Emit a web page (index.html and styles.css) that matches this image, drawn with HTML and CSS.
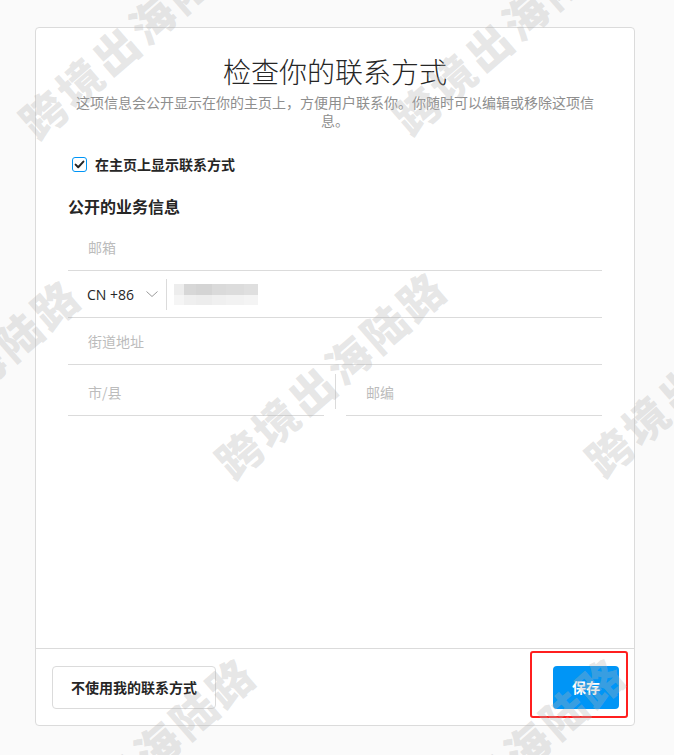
FILE: index.html
```html
<!DOCTYPE html>
<html lang="zh-CN">
<head>
<meta charset="utf-8">
<title>检查你的联系方式</title>
<link rel="stylesheet" href="styles.css">
</head>
<body>
<div class="card">
  <div class="card-body">
    <div class="header">
      <h1 class="title">检查你的联系方式</h1>
      <p class="subtitle">这项信息会公开显示在你的主页上，方便用户联系你。你随时可以编辑或移除这项信息。</p>
    </div>
    <div class="form">
      <label class="check-row">
        <span class="checkbox">
          <svg width="15" height="15" viewBox="0 0 15 15"><path d="M3.6 7.6 L6.2 10.2 L11.4 4.6" fill="none" stroke="#262626" stroke-width="2" stroke-linecap="round" stroke-linejoin="round"/></svg>
        </span>
        <span class="check-label">在主页上显示联系方式</span>
      </label>
      <h2 class="section-title">公开的业务信息</h2>
      <div class="field"><span class="placeholder">邮箱</span></div>
      <div class="field phone">
        <span class="country">CN +86</span>
        <svg class="chevron" width="12" height="6" viewBox="0 0 12 6"><polyline points="0.5,0.5 6,5.5 11.5,0.5" fill="none" stroke="#9a9a9a" stroke-width="1"/></svg>
        <span class="vdivider"></span>
        <span class="mosaic">
          <i class="m1"></i><i class="m2"></i><i class="m3"></i><i class="m4"></i><i class="m5"></i><i class="m6"></i>
          <i class="n1"></i><i class="n2"></i><i class="n3"></i><i class="n4"></i><i class="n5"></i><i class="n6"></i>
        </span>
      </div>
      <div class="field"><span class="placeholder">街道地址</span></div>
      <div class="city-row">
        <div class="field"><span class="placeholder">市/县</span></div>
        <div class="gap"><span class="vdivider tall"></span></div>
        <div class="field"><span class="placeholder">邮编</span></div>
      </div>
    </div>
  </div>
  <div class="footer">
    <button class="btn btn-secondary">不使用我的联系方式</button>
    <div class="save-wrap">
      <button class="btn btn-primary">保存</button>
    </div>
  </div>
</div>
<div class="watermarks" aria-hidden="true">
  <span class="wm wm1">跨境出海陆路</span>
  <span class="wm wm2">跨境出海陆路</span>
  <span class="wm wm3">跨境出海陆路</span>
  <span class="wm wm4">跨境出海陆路</span>
  <span class="wm wm5">跨境出海陆路</span>
  <span class="wm wm6">跨境出海陆路</span>
  <span class="wm wm7">跨境出海陆路</span>
</div>
</body>
</html>
```
FILE: styles.css
```css
* { box-sizing: border-box; }
html, body { margin: 0; padding: 0; }
body {
  background: #fafafa;
  font-family: "Noto Sans", "Noto Sans CJK SC", sans-serif;
  color: #262626;
  width: 674px;
  height: 755px;
  overflow: hidden;
  position: relative;
}
.card {
  margin: 27px 0 0 35px;
  width: 600px;
  height: 699px;
  background: #fff;
  border: 1px solid #dbdbdb;
  border-radius: 4px;
  display: flex;
  flex-direction: column;
}
.card-body { flex: 1; }
.header {
  padding: 25px 40px 0;
  text-align: center;
}
.title {
  margin: 0;
  font-family: "Noto Sans CJK SC", sans-serif;
  font-size: 28px;
  line-height: 36px;
  font-weight: 300;
  color: #262626;
}
.subtitle {
  margin: 4px 0 0;
  font-family: "Noto Sans CJK SC", sans-serif;
  font-size: 14px;
  line-height: 18px;
  color: #8e8e8e;
}
.form { padding: 0 32px; }
.check-row {
  margin-top: 27px;
  display: flex;
  align-items: center;
  padding-left: 4px;
  height: 16px;
}
.checkbox {
  width: 15px;
  height: 15px;
  border: 1px solid #0095f6;
  border-radius: 3px;
  display: flex;
  align-items: center;
  justify-content: center;
  overflow: hidden;
}
.checkbox svg { display: block; flex: none; }
.check-label {
  margin-left: 8px;
  font-family: "Noto Sans CJK SC", sans-serif;
  font-size: 14px;
  font-weight: 700;
  line-height: 16px;
}
.section-title {
  margin: 24px 0 0;
  font-family: "Noto Sans CJK SC", sans-serif;
  font-size: 16px;
  line-height: 20px;
  font-weight: 700;
}
.section-title + .field { margin-top: 8px; }
.field {
  height: 47px;
  border-bottom: 1px solid #dbdbdb;
  padding-left: 20px;
  display: flex;
  align-items: center;
}
.placeholder {
  font-family: "Noto Sans CJK SC", sans-serif;
  font-size: 14px;
  color: #bcbcbc;
}
.phone { padding-left: 19px; }
.country {
  font-family: "Open Sans", sans-serif;
  font-size: 14px;
  color: #262626;
}
.chevron { margin-left: 12px; display: block; }
.vdivider {
  display: block;
  width: 1px;
  height: 31px;
  background: #dbdbdb;
  margin-left: 8px;
}
.vdivider.tall { height: 35px; margin: 0; }
.mosaic {
  margin-left: 7px;
  width: 84px;
  height: 21px;
  display: grid;
  grid-template-columns: 10px 12px 16px 14px 18px 14px;
  grid-template-rows: 11px 10px;
  opacity: 0.9;
}
.mosaic i { display: block; }
.m1 { background: #ececec; }
.m2 { background: #d3d3d3; }
.m3 { background: #d0d0d0; }
.m4 { background: #d6d6d6; }
.m5 { background: #d9d9d9; }
.m6 { background: #dcdcdc; }
.n1 { background: #f5f5f5; }
.n2 { background: #eeeeee; }
.n3 { background: #ececec; }
.n4 { background: #efefef; }
.n5 { background: #f1f1f1; }
.n6 { background: #f3f3f3; }
.city-row {
  margin-top: 4px;
  display: grid;
  grid-template-columns: 1fr 22px 1fr;
}
.city-row .field { height: 47px; }
.gap {
  display: flex;
  justify-content: center;
  padding-top: 5px;
}
.footer {
  height: 77px;
  border-top: 1px solid #dbdbdb;
  padding: 0 15px 0 16px;
  display: flex;
  align-items: center;
  justify-content: space-between;
}
.btn {
  height: 43px;
  border-radius: 4px;
  font-family: "Noto Sans CJK SC", sans-serif;
  font-size: 14px;
  font-weight: 700;
  padding: 0;
  white-space: nowrap;
  cursor: pointer;
}
.btn-secondary {
  background: #fff;
  border: 1px solid #dbdbdb;
  color: #262626;
  width: 164px;
}
.btn-primary {
  background: #0095f6;
  border: none;
  color: #fff;
  width: 66px;
}
.save-wrap { position: relative; display: flex; }
.save-wrap::after {
  content: "";
  position: absolute;
  left: -23px;
  right: -9px;
  top: -15px;
  bottom: -9px;
  border: 2px solid #ff1f1f;
  border-radius: 3px;
  pointer-events: none;
}
.watermarks {
  position: absolute;
  inset: 0;
  pointer-events: none;
  overflow: hidden;
}
.wm {
  position: absolute;
  font-family: "Noto Sans CJK SC", sans-serif;
  font-weight: 900;
  font-size: 44px;
  line-height: 44px;
  letter-spacing: 4px;
  white-space: nowrap;
  color: rgba(180, 180, 180, 0.32);
  transform-origin: 0 100%;
  transform: rotate(-41deg);
}
.wm1 { left: 40px; top: 100px; }
.wm2 { left: 413px; top: 96px; }
.wm3 { left: -130px; top: 448px; }
.wm4 { left: 236px; top: 440px; }
.wm5 { left: 606px; top: 438px; }
.wm6 { left: 45px; top: 826px; }
.wm7 { left: 415px; top: 826px; }
```
